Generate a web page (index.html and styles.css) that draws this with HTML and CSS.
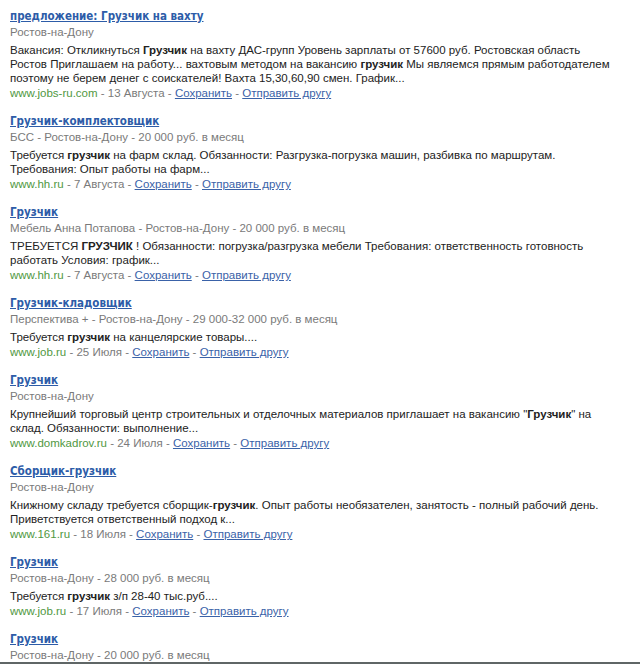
FILE: index.html
```html
<!DOCTYPE html>
<html lang="ru">
<head>
<meta charset="utf-8">
<title>Грузчик — вакансии</title>
<link rel="stylesheet" href="styles.css">
</head>
<body>
<div class="page">
  <ul class="results">
    <li class="item">
      <a class="title" href="#">предложение: Грузчик на вахту</a>
      <div class="meta">Ростов-на-Дону</div>
      <p class="snippet">Вакансия: Откликнуться <b>Грузчик</b> на вахту ДАС-групп Уровень зарплаты от 57600 руб. Ростовская область<br>Ростов Приглашаем на работу... вахтовым методом на вакансию <b>грузчик</b> Мы являемся прямым работодателем<br>поэтому не берем денег с соискателей! Вахта 15,30,60,90 смен. График...</p>
      <div class="foot"><span class="src">www.jobs-ru.com</span> - 13 Августа - <a href="#">Сохранить</a> - <a href="#">Отправить другу</a></div>
    </li>
    <li class="item">
      <a class="title" href="#">Грузчик-комплектовщик</a>
      <div class="meta">БСС - Ростов-на-Дону - 20 000 руб. в месяц</div>
      <p class="snippet">Требуется <b>грузчик</b> на фарм склад. Обязанности: Разгрузка-погрузка машин, разбивка по маршрутам.<br>Требования: Опыт работы на фарм...</p>
      <div class="foot"><span class="src">www.hh.ru</span> - 7 Августа - <a href="#">Сохранить</a> - <a href="#">Отправить другу</a></div>
    </li>
    <li class="item">
      <a class="title" href="#">Грузчик</a>
      <div class="meta">Мебель Анна Потапова - Ростов-на-Дону - 20 000 руб. в месяц</div>
      <p class="snippet">ТРЕБУЕТСЯ <b>ГРУЗЧИК</b> ! Обязанности: погрузка/разгрузка мебели Требования: ответственность готовность<br>работать Условия: график...</p>
      <div class="foot"><span class="src">www.hh.ru</span> - 7 Августа - <a href="#">Сохранить</a> - <a href="#">Отправить другу</a></div>
    </li>
    <li class="item">
      <a class="title" href="#">Грузчик-кладовщик</a>
      <div class="meta">Перспектива + - Ростов-на-Дону - 29 000-32 000 руб. в месяц</div>
      <p class="snippet">Требуется <b>грузчик</b> на канцелярские товары....</p>
      <div class="foot"><span class="src">www.job.ru</span> - 25 Июля - <a href="#">Сохранить</a> - <a href="#">Отправить другу</a></div>
    </li>
    <li class="item">
      <a class="title" href="#">Грузчик</a>
      <div class="meta">Ростов-на-Дону</div>
      <p class="snippet">Крупнейший торговый центр строительных и отделочных материалов приглашает на вакансию "<b>Грузчик</b>" на<br>склад. Обязанности: выполнение...</p>
      <div class="foot"><span class="src">www.domkadrov.ru</span> - 24 Июля - <a href="#">Сохранить</a> - <a href="#">Отправить другу</a></div>
    </li>
    <li class="item">
      <a class="title" href="#">Сборщик-грузчик</a>
      <div class="meta">Ростов-на-Дону</div>
      <p class="snippet">Книжному складу требуется сборщик-<b>грузчик</b>. Опыт работы необязателен, занятость - полный рабочий день.<br>Приветствуется ответственный подход к...</p>
      <div class="foot"><span class="src">www.161.ru</span> - 18 Июля - <a href="#">Сохранить</a> - <a href="#">Отправить другу</a></div>
    </li>
    <li class="item">
      <a class="title" href="#">Грузчик</a>
      <div class="meta">Ростов-на-Дону - 28 000 руб. в месяц</div>
      <p class="snippet">Требуется <b>грузчик</b> з/п 28-40 тыс.руб....</p>
      <div class="foot"><span class="src">www.job.ru</span> - 17 Июля - <a href="#">Сохранить</a> - <a href="#">Отправить другу</a></div>
    </li>
    <li class="item">
      <a class="title" href="#">Грузчик</a>
      <div class="meta">Ростов-на-Дону - 20 000 руб. в месяц</div>
    </li>
  </ul>
</div>
</body>
</html>
```

FILE: styles.css
```css
html, body {
  margin: 0;
  padding: 0;
  background: #ffffff;
}

body {
  font-family: "Liberation Sans", Arial, sans-serif;
  font-size: 11.5px;
  color: #222222;
  overflow: hidden;
}

.page {
  height: 662px;
  overflow: hidden;
  border-bottom: 2px solid #5f6666;
}

.results {
  list-style: none;
  margin: 0;
  padding: 8px 0 0 10px;
  width: 620px;
}

.item {
  margin: 0 0 12px 0;
}

.title {
  display: block;
  font-family: "DejaVu Sans", Verdana, sans-serif;
  font-stretch: condensed;
  font-weight: bold;
  font-size: 11.5px;
  line-height: 16px;
  color: #2d5ca8;
  text-decoration: underline;
}

.meta {
  line-height: 16px;
  color: #7a7a7a;
}

.snippet {
  margin: 3px 0 0 0;
  line-height: 14px;
  color: #222222;
  white-space: nowrap;
}

.snippet b {
  color: #222222;
}

.foot {
  margin-top: 1px;
  line-height: 15px;
  color: #7a7a7a;
}

.foot .src {
  color: #50983f;
}

.foot a {
  color: #3a62a8;
  text-decoration: underline;
}
```
